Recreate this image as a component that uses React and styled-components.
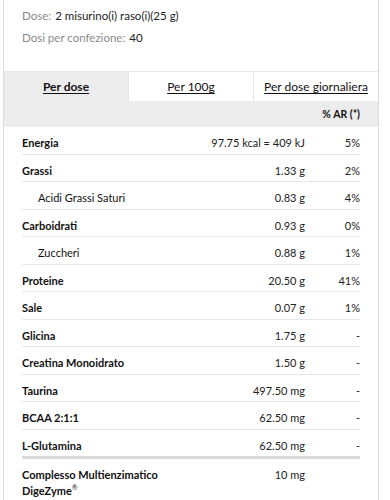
import React from "react";
import styled, { createGlobalStyle } from "styled-components";

const Global = createGlobalStyle`
  html, body { margin: 0; padding: 0; background: #fff; }
  body { font-family: "Lato", "Open Sans", sans-serif; color: #111; }
`;

const Card = styled.div`
  margin-left: 3px;
  width: 374px;
  border-left: 1px solid #dcdcdc;
  border-right: 1px solid #dcdcdc;
  min-height: 500px;
`;

const Info = styled.div`
  padding: 5px 0 22px 18px;
  display: flex;
  flex-direction: column;
`;

const InfoLine = styled.div`
  font-size: 11.5px;
  line-height: 22px;
  color: #222;
`;

const InfoLabel = styled.span`
  color: #8a8a8a;
  margin-right: 4px;
`;

const Tabs = styled.div`
  display: grid;
  grid-template-columns: 124px 125px 1fr;
  border-top: 1px solid #e6e6e6;
  height: 29px;
`;

const Tab = styled.div`
  display: flex;
  align-items: center;
  justify-content: center;
  background: ${(p) => (p.$active ? "#ececec" : "#fff")};
  border-left: ${(p) => (p.$first ? "none" : "1px solid #e6e6e6")};
  font-size: 12px;
  font-weight: ${(p) => (p.$active ? 700 : 400)};
  color: #111;
  text-decoration: underline;
  text-underline-offset: 2px;
`;

const HeadRow = styled.div`
  background: #ececec;
  height: 26px;
  display: flex;
  align-items: center;
  justify-content: flex-end;
  padding-right: 18px;
  font-size: 10.5px;
  font-weight: 700;
  color: #111;
`;

const Body = styled.div`
  padding: 0 18px;
`;

const Row = styled.div`
  display: grid;
  grid-template-columns: 1fr 120px 55px;
  align-items: start;
  box-sizing: border-box;
  padding-top: 8px;
  padding-bottom: ${(p) => (p.$thick ? "6px" : "3.5px")};
  border-top: ${(p) =>
    p.$thick ? "3px solid #dadada" : p.$first ? "none" : "1px solid #e6e6e6"};
  font-size: 11px;
  line-height: ${(p) => (p.$thick ? "16px" : "15px")};
`;

const Name = styled.div`
  font-weight: ${(p) => (p.$sub ? 400 : 700)};
  padding-left: ${(p) => (p.$sub ? "16px" : "0")};
  color: #111;
`;

const Reg = styled.sup`
  font-size: 7px;
  font-weight: 400;
  line-height: 0;
`;

const Value = styled.div`
  text-align: right;
  color: #222;
`;

const Pct = styled.div`
  text-align: right;
  color: #222;
`;

const rows = [
  { n: "Energia", v: "97.75 kcal = 409 kJ", p: "5%" },
  { n: "Grassi", v: "1.33 g", p: "2%" },
  { n: "Acidi Grassi Saturi", v: "0.83 g", p: "4%", sub: true },
  { n: "Carboidrati", v: "0.93 g", p: "0%" },
  { n: "Zuccheri", v: "0.88 g", p: "1%", sub: true },
  { n: "Proteine", v: "20.50 g", p: "41%" },
  { n: "Sale", v: "0.07 g", p: "1%" },
  { n: "Glicina", v: "1.75 g", p: "-" },
  { n: "Creatina Monoidrato", v: "1.50 g", p: "-" },
  { n: "Taurina", v: "497.50 mg", p: "-" },
  { n: "BCAA 2:1:1", v: "62.50 mg", p: "-" },
  { n: "L-Glutamina", v: "62.50 mg", p: "-" },
];

export default function App() {
  return (
    <>
      <Global />
      <Card>
        <Info>
          <InfoLine>
            <InfoLabel>Dose:</InfoLabel>2 misurino(i) raso(i)(25 g)
          </InfoLine>
          <InfoLine>
            <InfoLabel>Dosi per confezione:</InfoLabel>40
          </InfoLine>
        </Info>
        <Tabs>
          <Tab $active $first>Per dose</Tab>
          <Tab>Per 100g</Tab>
          <Tab>Per dose giornaliera</Tab>
        </Tabs>
        <HeadRow>% AR (*)</HeadRow>
        <Body>
          {rows.map((r, i) => (
            <Row key={r.n} $first={i === 0}>
              <Name $sub={r.sub}>{r.n}</Name>
              <Value>{r.v}</Value>
              <Pct>{r.p}</Pct>
            </Row>
          ))}
          <Row $thick>
            <Name>
              Complesso Multienzimatico
              <br />
              DigeZyme<Reg>®</Reg>
            </Name>
            <Value>10 mg</Value>
            <Pct></Pct>
          </Row>
        </Body>
      </Card>
    </>
  );
}
